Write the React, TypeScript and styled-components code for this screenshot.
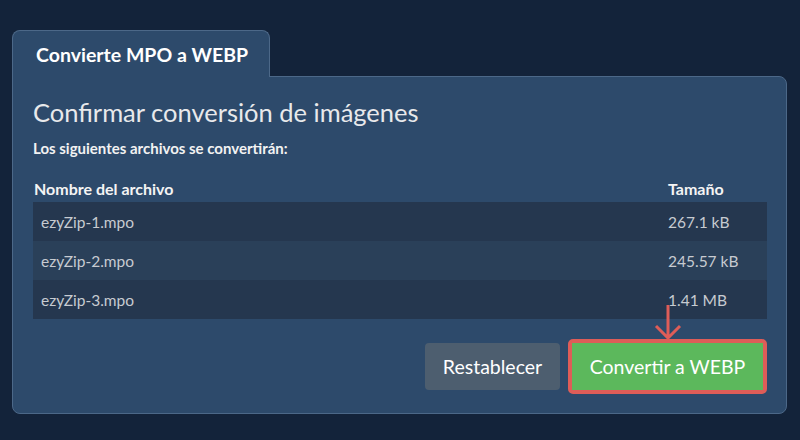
import React from "react";
import styled, { createGlobalStyle } from "styled-components";

const Global = createGlobalStyle`
  html, body { margin: 0; padding: 0; background: #13233a; }
  body { font-family: Lato, "Open Sans", sans-serif; }
  * { box-sizing: border-box; }
`;

const Page = styled.div`
  width: 800px;
  height: 440px;
  padding: 30px 13px 0 12px;
  background: #13233a;
`;

const TabBar = styled.div`
  display: flex;
`;

const Tab = styled.div`
  position: relative;
  z-index: 1;
  width: 258px;
  height: 47px;
  margin-bottom: -1px;
  padding: 0 0 0 23px;
  display: flex;
  align-items: center;
  background: #2d4a6b;
  border: 1px solid #4c6888;
  border-bottom: none;
  border-radius: 8px 8px 0 0;
  color: #ffffff;
  font-weight: 700;
  font-size: 19.5px;
`;

const Panel = styled.div`
  background: #2d4a6b;
  border: 1px solid #4c6888;
  border-radius: 0 8px 8px 8px;
  padding: 20px 19px 19px 20px;
`;

const Heading = styled.h2`
  margin: 0;
  font-size: 25.5px;
  line-height: 31px;
  font-weight: 400;
  color: #e8e9eb;
`;

const Subtitle = styled.p`
  margin: 10px 0 0;
  font-size: 15px;
  line-height: 20px;
  font-weight: 700;
  color: #f2f2f2;
`;

const Table = styled.div`
  margin-top: 16px;
  display: grid;
  grid-template-columns: 1fr 107px;
`;

const HeadCell = styled.div<{ $first?: boolean }>`
  height: 28px;
  display: flex;
  align-items: center;
  padding-left: ${(p) => (p.$first ? "1px" : "8px")};
  font-size: 16px;
  font-weight: 700;
  color: #f4f4f4;
`;

const Cell = styled.div<{ $alt?: boolean }>`
  height: 39px;
  display: flex;
  align-items: center;
  padding: 0 8px;
  font-size: 15.5px;
  color: #c7cbd1;
  background: ${(p) => (p.$alt ? "#2a4059" : "#25374f")};
`;

const Actions = styled.div`
  margin-top: 20px;
  display: flex;
  justify-content: flex-end;
  align-items: center;
  gap: 8px;
`;

const Button = styled.button<{ $variant: "reset" | "convert" }>`
  height: 47px;
  border: none;
  border-radius: ${(p) => (p.$variant === "reset" ? "4px" : "0")};
  padding: 0;
  font-family: Lato, "Open Sans", sans-serif;
  font-size: 19.5px;
  color: #ffffff;
  cursor: pointer;
  background: ${(p) => (p.$variant === "reset" ? "#4d5e6f" : "#5cb85c")};
`;

const Highlight = styled.div`
  position: relative;
  display: flex;
  border: 4px solid #de5d58;
  border-radius: 5px;
`;

const Arrow = styled.svg`
  position: absolute;
  left: 50%;
  bottom: calc(100% + 3px);
  transform: translateX(-50%);
`;

const files = [
  { name: "ezyZip-1.mpo", size: "267.1 kB" },
  { name: "ezyZip-2.mpo", size: "245.57 kB" },
  { name: "ezyZip-3.mpo", size: "1.41 MB" },
];

export default function App() {
  return (
    <Page>
      <Global />
      <TabBar>
        <Tab>Convierte MPO a WEBP</Tab>
      </TabBar>
      <Panel>
        <Heading>Confirmar conversión de imágenes</Heading>
        <Subtitle>Los siguientes archivos se convertirán:</Subtitle>
        <Table>
          <HeadCell $first>Nombre del archivo</HeadCell>
          <HeadCell>Tamaño</HeadCell>
          {files.map((f, i) => (
            <React.Fragment key={f.name}>
              <Cell $alt={i % 2 === 1}>{f.name}</Cell>
              <Cell $alt={i % 2 === 1}>{f.size}</Cell>
            </React.Fragment>
          ))}
        </Table>
        <Actions>
          <Button $variant="reset" style={{ width: 135 }}>Restablecer</Button>
          <Highlight>
            <Arrow width="28" height="36" viewBox="0 0 28 36">
              <path d="M14 1 V34 M2 22 L14 34 L26 22" fill="none" stroke="#de5d58" strokeWidth="3" />
            </Arrow>
            <Button $variant="convert" style={{ width: 191 }}>Convertir a WEBP</Button>
          </Highlight>
        </Actions>
      </Panel>
    </Page>
  );
}
